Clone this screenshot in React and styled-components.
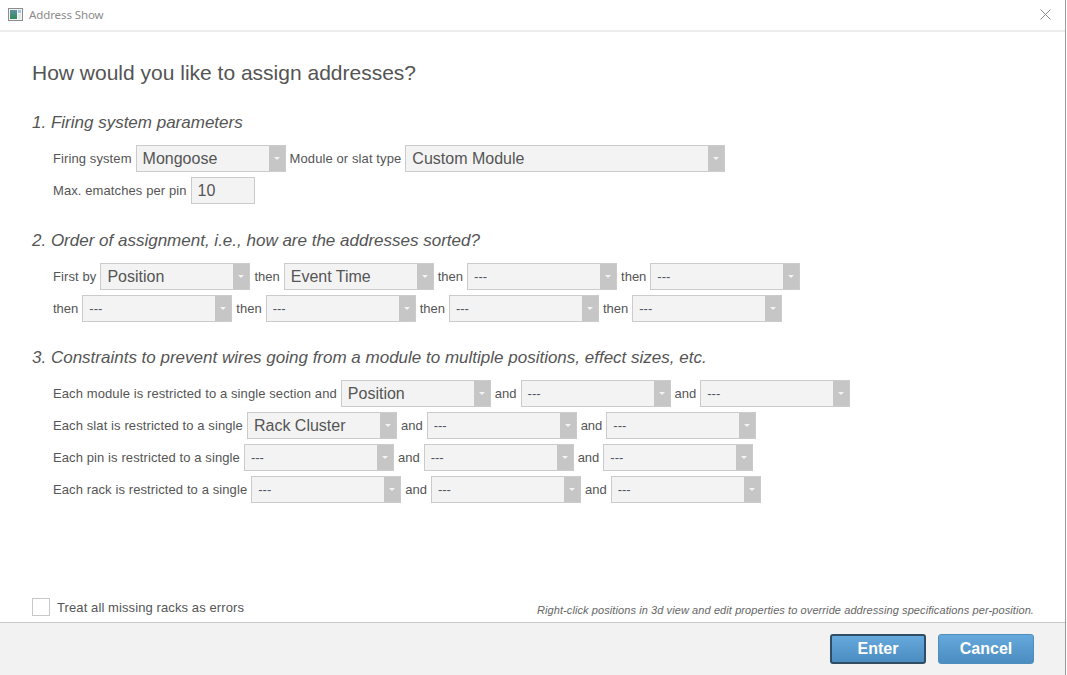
import React from "react";
import styled, { createGlobalStyle } from "styled-components";

const Global = createGlobalStyle`
  html, body { margin: 0; padding: 0; background: #ffffff; }
  body { font-family: "Liberation Sans", Arial, sans-serif; color: #555555; }
  * { box-sizing: border-box; }
`;

const Frame = styled.div`
  width: 1066px;
  height: 675px;
  display: flex;
  flex-direction: column;
  border-right: 1px solid #9a9a9a;
  background: #ffffff;
`;

const TitleBar = styled.div`
  height: 32px;
  flex: none;
  display: flex;
  align-items: center;
  padding: 0 0 2px 8px;
  border-bottom: 2px solid #ececec;
`;

const TitleText = styled.span`
  margin-left: 6px;
  font-family: "Noto Sans", "Open Sans", sans-serif;
  font-size: 11.5px;
  color: #8a8a8a;
  letter-spacing: -0.1px;
`;

const CloseButton = styled.div`
  margin-left: auto;
  width: 30px;
  height: 28px;
  display: flex;
  align-items: center;
  justify-content: center;
  margin-right: 5px;
`;

const Content = styled.div`
  flex: 1;
  display: flex;
  flex-direction: column;
  padding: 29px 31px 6px 32px;
`;

const Heading = styled.h1`
  margin: 0;
  font-size: 21px;
  line-height: 24px;
  font-weight: normal;
  color: #545454;
`;

const Section = styled.section`
  margin-top: ${(p) => p.$top}px;
  display: flex;
  flex-direction: column;
`;

const SectionTitle = styled.h2`
  margin: 0 0 12px 0;
  font-size: 17px;
  line-height: 20px;
  font-style: italic;
  font-weight: normal;
  color: #555555;
`;

const Rows = styled.div`
  display: flex;
  flex-direction: column;
  gap: 5px;
  padding-left: 21px;
`;

const Row = styled.div`
  display: flex;
  align-items: center;
  gap: 4px;
  height: 27px;
`;

const Label = styled.span`
  font-size: 13px;
  letter-spacing: 0.1px;
  color: #555555;
  white-space: nowrap;
`;

const Connector = styled(Label)`
  letter-spacing: 0;
`;

const SelectBox = styled.div`
  width: ${(p) => p.$w}px;
  height: 27px;
  display: flex;
  align-items: stretch;
  background: #f3f3f3;
  border: 1px solid #cbcbcb;
`;

const SelectValue = styled.div`
  flex: 1;
  display: flex;
  align-items: center;
  padding-left: 6px;
  font-size: ${(p) => (p.$empty ? 13 : 16)}px;
  color: ${(p) => (p.$empty ? "#4f5566" : "#555555")};
  white-space: nowrap;
  overflow: hidden;
`;

const SelectArrow = styled.div`
  width: 16px;
  background: #c6c6c6;
  display: flex;
  align-items: center;
  justify-content: center;
  padding-bottom: 1px;
`;

const Caret = styled.div`
  width: 0;
  height: 0;
  border-left: 3px solid transparent;
  border-right: 3px solid transparent;
  border-top: 3px solid #f4f4f4;
`;

const InputBox = styled.div`
  width: ${(p) => p.$w}px;
  height: 27px;
  display: flex;
  align-items: center;
  padding-left: 6px;
  background: #f3f3f3;
  border: 1px solid #cbcbcb;
  font-size: 16px;
  color: #555555;
`;

const BottomRow = styled.div`
  margin-top: auto;
  display: flex;
  align-items: flex-end;
  justify-content: space-between;
`;

const CheckRow = styled.label`
  display: flex;
  align-items: center;
  gap: 7px;
`;

const CheckBox = styled.span`
  width: 18px;
  height: 18px;
  background: #ffffff;
  border: 1px solid #c8c8c8;
  display: inline-block;
`;

const Note = styled.span`
  font-size: 11px;
  line-height: 13px;
  letter-spacing: 0.09px;
  font-style: italic;
  color: #666666;
  margin-bottom: -1px;
`;

const Footer = styled.div`
  height: 53px;
  flex: none;
  display: flex;
  justify-content: flex-end;
  align-items: flex-start;
  gap: 12px;
  padding: 11px 31px 0 0;
  background: #f2f2f2;
  border-top: 1px solid #c9c9c9;
`;

const Button = styled.button`
  width: ${(p) => p.$w}px;
  height: 30px;
  border-radius: 3px;
  border: ${(p) => (p.$primary ? "2px solid #2f4e66" : "1px solid #4f8dbd")};
  background: linear-gradient(#66a9dc, #4b8cc1);
  color: #ffffff;
  font-family: "Liberation Sans", Arial, sans-serif;
  font-size: 16px;
  font-weight: bold;
  padding: 0;
  cursor: pointer;
`;

function Select({ w = 150, value }) {
  const empty = !value;
  return (
    <SelectBox $w={w}>
      <SelectValue $empty={empty}>{empty ? "---" : value}</SelectValue>
      <SelectArrow>
        <Caret />
      </SelectArrow>
    </SelectBox>
  );
}

function AppIcon() {
  return (
    <svg width="15" height="13" viewBox="0 0 15 13">
      <rect x="0.5" y="0.5" width="14" height="12" fill="#f4f4f4" stroke="#8c8c8c" />
      <defs>
        <linearGradient id="ig" x1="0" y1="0" x2="0" y2="1">
          <stop offset="0" stopColor="#5f8f9f" />
          <stop offset="1" stopColor="#2f8a5a" />
        </linearGradient>
      </defs>
      <rect x="2" y="2" width="7" height="9" fill="url(#ig)" />
      <rect x="10" y="2" width="3" height="3" fill="#9fc3e0" />
      <rect x="10" y="6" width="3" height="5" fill="#e6e6e6" />
    </svg>
  );
}

function CloseIcon() {
  return (
    <svg width="11" height="11" viewBox="0 0 11 11">
      <path d="M0.5 0.5 L10.5 10.5 M10.5 0.5 L0.5 10.5" stroke="#8a8a8a" strokeWidth="1" fill="none" />
    </svg>
  );
}

export default function App() {
  return (
    <>
      <Global />
      <Frame>
        <TitleBar>
          <AppIcon />
          <TitleText>Address Show</TitleText>
          <CloseButton>
            <CloseIcon />
          </CloseButton>
        </TitleBar>
        <Content>
          <Heading>How would you like to assign addresses?</Heading>

          <Section $top={28}>
            <SectionTitle>1. Firing system parameters</SectionTitle>
            <Rows>
              <Row>
                <Label>Firing system</Label>
                <Select value="Mongoose" />
                <Label>Module or slat type</Label>
                <Select w={320} value="Custom Module" />
              </Row>
              <Row>
                <Label>Max. ematches per pin</Label>
                <InputBox $w={64}>10</InputBox>
              </Row>
            </Rows>
          </Section>

          <Section $top={27}>
            <SectionTitle>2. Order of assignment, i.e., how are the addresses sorted?</SectionTitle>
            <Rows>
              <Row>
                <Label>First by</Label>
                <Select value="Position" />
                <Connector>then</Connector>
                <Select value="Event Time" />
                <Connector>then</Connector>
                <Select />
                <Connector>then</Connector>
                <Select />
              </Row>
              <Row>
                <Connector>then</Connector>
                <Select />
                <Connector>then</Connector>
                <Select />
                <Connector>then</Connector>
                <Select />
                <Connector>then</Connector>
                <Select />
              </Row>
            </Rows>
          </Section>

          <Section $top={26}>
            <SectionTitle>3. Constraints to prevent wires going from a module to multiple positions, effect sizes, etc.</SectionTitle>
            <Rows>
              <Row>
                <Label>Each module is restricted to a single section and</Label>
                <Select value="Position" />
                <Connector>and</Connector>
                <Select />
                <Connector>and</Connector>
                <Select />
              </Row>
              <Row>
                <Label>Each slat is restricted to a single</Label>
                <Select value="Rack Cluster" />
                <Connector>and</Connector>
                <Select />
                <Connector>and</Connector>
                <Select />
              </Row>
              <Row>
                <Label>Each pin is restricted to a single</Label>
                <Select />
                <Connector>and</Connector>
                <Select />
                <Connector>and</Connector>
                <Select />
              </Row>
              <Row>
                <Label>Each rack is restricted to a single</Label>
                <Select />
                <Connector>and</Connector>
                <Select />
                <Connector>and</Connector>
                <Select />
              </Row>
            </Rows>
          </Section>

          <BottomRow>
            <CheckRow>
              <CheckBox />
              <Label>Treat all missing racks as errors</Label>
            </CheckRow>
            <Note>
              Right-click positions in 3d view and edit properties to override addressing specifications per-position.
            </Note>
          </BottomRow>
        </Content>
        <Footer>
          <Button $primary $w={96}>Enter</Button>
          <Button $w={96}>Cancel</Button>
        </Footer>
      </Frame>
    </>
  );
}
